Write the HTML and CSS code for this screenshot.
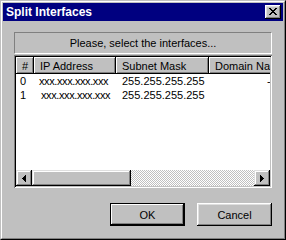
FILE: index.html
```
<!DOCTYPE html>
<html>
<head>
<meta charset="utf-8">
<link rel="stylesheet" href="styles.css">
</head>
<body>
<div class="window">
  <div class="frame">
    <div class="titlebar">
      <span class="title">Split Interfaces</span>
      <button class="close" aria-label="Close">
        <svg width="8" height="7" viewBox="0 0 8 7" shape-rendering="crispEdges"><path fill="#000" d="M0 0h2v1H0zM6 0h2v1H6zM1 1h2v1H1zM5 1h2v1H5zM2 2h4v1H2zM3 3h2v1H3zM2 4h4v1H2zM1 5h2v1H1zM5 5h2v1H5zM0 6h2v1H0zM6 6h2v1H6z"/></svg>
      </button>
    </div>
    <div class="content">
      <div class="banner">Please, select the interfaces...</div>
      <div class="list">
        <div class="header">
          <div class="hcell">#</div>
          <div class="hcell">IP Address</div>
          <div class="hcell">Subnet Mask</div>
          <div class="hcell last">Domain Name</div>
        </div>
        <div class="rows">
          <div class="row">
            <div class="cell num">0</div>
            <div class="cell ip">xxx.xxx.xxx.xxx</div>
            <div class="cell">255.255.255.255</div>
            <div class="cell dom">-</div>
          </div>
          <div class="row">
            <div class="cell num">1</div>
            <div class="cell ip ip2">xxx.xxx.xxx.xxx</div>
            <div class="cell">255.255.255.255</div>
            <div class="cell"></div>
          </div>
        </div>
        <div class="hscroll">
          <div class="sbtn">
            <svg width="4" height="7" viewBox="0 0 4 7" shape-rendering="crispEdges"><path fill="#000" d="M3 0h1v7H3zM2 1h1v5H2zM1 2h1v3H1zM0 3h1v1H0z"/></svg>
          </div>
          <div class="thumb"></div>
          <div class="track"></div>
          <div class="sbtn">
            <svg width="4" height="7" viewBox="0 0 4 7" shape-rendering="crispEdges"><path fill="#000" d="M0 0h1v7H0zM1 1h1v5H1zM2 2h1v3H2zM3 3h1v1H3z"/></svg>
          </div>
        </div>
      </div>
      <div class="buttons">
        <button class="btn default">OK</button>
        <button class="btn">Cancel</button>
      </div>
    </div>
  </div>
</div>
</body>
</html>
```
FILE: styles.css
```
html, body {
  margin: 0;
  padding: 0;
  background: #c0c0c0;
}
body {
  font-family: "Liberation Sans", Arial, sans-serif;
  font-size: 11px;
  color: #000;
}
.window {
  width: 286px;
  height: 240px;
  box-sizing: border-box;
  border: 1px solid;
  border-color: #c0c0c0 #000 #000 #c0c0c0;
  background: #c0c0c0;
}
.frame {
  height: 100%;
  box-sizing: border-box;
  border: 1px solid;
  border-color: #fff #808080 #808080 #fff;
  padding: 1px;
  display: flex;
  flex-direction: column;
}
.titlebar {
  height: 18px;
  flex: none;
  background: #000080;
  display: flex;
  align-items: center;
  justify-content: space-between;
  padding: 0 2px 0 3px;
}
.title {
  color: #fff;
  font-weight: bold;
  font-size: 12px;
}
.close {
  width: 16px;
  height: 14px;
  padding: 0;
  border: 0;
  background: #c0c0c0;
  box-shadow: inset -1px -1px #000, inset 1px 1px #fff, inset -2px -2px #808080, inset 2px 2px #dfdfdf;
  display: flex;
  align-items: center;
  justify-content: center;
}
.close svg { display: block; margin: 0 0 1px 0; }
.content {
  flex: 1;
  padding: 11px 11px 0;
  display: flex;
  flex-direction: column;
}
.banner {
  height: 22px;
  box-sizing: border-box;
  border: 1px solid;
  border-color: #808080 #fff #fff #808080;
  display: flex;
  align-items: center;
  justify-content: center;
}
.list {
  margin-top: 1px;
  height: 133px;
  box-sizing: border-box;
  padding: 2px;
  background: #fff;
  box-shadow: inset 1px 1px #808080, inset -1px -1px #fff, inset 2px 2px #000, inset -2px -2px #c0c0c0;
  display: flex;
  flex-direction: column;
}
.header, .row {
  display: grid;
  grid-template-columns: 18px 82px 93px 100px;
  overflow: hidden;
}
.header {
  height: 17px;
  flex: none;
}
.hcell {
  background: #c0c0c0;
  box-shadow: inset -1px -1px #000, inset 1px 1px #fff, inset -2px -2px #808080;
  padding-left: 6px;
  display: flex;
  align-items: center;
  white-space: nowrap;
  overflow: hidden;
}
.rows {
  flex: 1;
}
.row {
  height: 14px;
  align-items: center;
}
.cell {
  padding-left: 6px;
  white-space: nowrap;
  overflow: hidden;
}
.cell.num { padding-left: 4px; }
.cell.ip { padding-left: 5px; letter-spacing: -0.4px; }
.cell.ip2 { padding-left: 7px; }
.cell.dom { padding-left: 58px; }
.hscroll {
  height: 16px;
  flex: none;
  display: flex;
}
.sbtn, .thumb {
  background: #c0c0c0;
  box-shadow: inset -1px -1px #000, inset 1px 1px #dfdfdf, inset -2px -2px #808080, inset 2px 2px #fff;
}
.sbtn {
  width: 16px;
  flex: none;
  display: flex;
  align-items: center;
  justify-content: center;
}
.sbtn svg { display: block; }
.thumb {
  width: 99px;
  flex: none;
}
.track {
  flex: 1;
  background: repeating-conic-gradient(#c0c0c0 0 25%, #fff 0 50%) 0 0 / 2px 2px;
}
.buttons {
  margin-top: 15px;
  display: flex;
  justify-content: flex-end;
  gap: 12px;
}
.btn {
  width: 75px;
  height: 23px;
  padding: 0;
  border: 0;
  background: #c0c0c0;
  font-family: "Liberation Sans", Arial, sans-serif;
  font-size: 11px;
  color: #000;
  box-shadow: inset -1px -1px #000, inset 1px 1px #fff, inset -2px -2px #808080, inset 2px 2px #dfdfdf;
}
.btn.default {
  box-shadow: inset 0 0 0 1px #000, inset -2px -2px #000, inset 2px 2px #fff, inset -3px -3px #808080;
}
```
